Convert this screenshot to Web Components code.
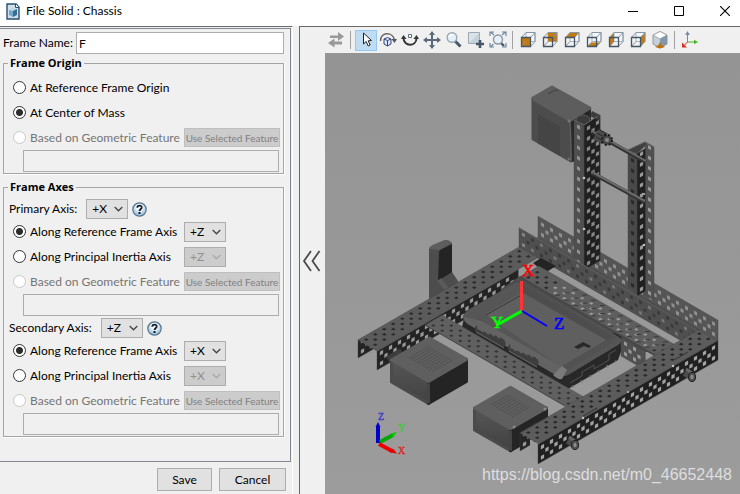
<!DOCTYPE html>
<html lang="en">
<head>
<meta charset="utf-8">
<title>File Solid : Chassis</title>
<style>
html,body{margin:0;height:100%}
body{font:12px/16px Lato,"Open Sans",sans-serif;color:#000;background:#f0f0f0;overflow:hidden}
</style>
</head>
<body>
<solid-window>
  <title-bar slot="title">File Solid : Chassis</title-bar>
  <frame-panel slot="side"></frame-panel>
  <collapse-strip slot="strip"></collapse-strip>
  <view-toolbar slot="tools"></view-toolbar>
  <model-view slot="view"></model-view>
</solid-window>
<script>
const define = (name, html, setup) => customElements.define(name, class extends HTMLElement {
  connectedCallback() {
    if (this.shadowRoot) return;
    const root = this.attachShadow({mode: 'open'});
    const t = document.createElement('template');
    t.innerHTML = typeof html === 'function' ? html(this) : html;
    root.append(t.content.cloneNode(true));
    if (setup) setup(this, root);
  }
});

define('solid-window', `
<style>
:host{display:grid;grid-template:26px minmax(0,1fr)/293px minmax(0,1fr);column-gap:6px;height:100vh;background:#f0f0f0}
header{grid-column:1/3;background:#fff}
aside{border-top:1px solid #696969;border-right:1px solid #fff;min-width:0}
main{display:grid;grid-template:26px minmax(0,1fr)/25px minmax(0,1fr);border-left:1px solid #696969;border-top:1px solid #696969;min-width:0}
.strip{grid-row:1/3}
.view{min-height:0}
::slotted(*){height:100%}
</style>
<header><slot name="title"></slot></header>
<aside><slot name="side"></slot></aside>
<main><div class="strip"><slot name="strip"></slot></div><div><slot name="tools"></slot></div><div class="view"><slot name="view"></slot></div></main>`);

define('title-bar', `
<style>
:host{display:flex;align-items:center;gap:36px;box-sizing:border-box;padding:0 10px 4px 6px;background:#fff}
.name{flex:1;display:flex;align-items:center;gap:6px}
button{all:unset;width:10px;height:20px;display:grid;place-items:center}
</style>
<span class="name"><svg width="14" height="17" viewBox="0 0 14 17"><path d="M1 1h9l3 3v12H1z" fill="#cfe0ec" stroke="#284f6b" stroke-width="1.4"/><path d="M9.500 1v3.500H13" fill="#fff" stroke="#284f6b"/><path d="M3 7l4-2 4 1-4 2z" fill="#b9d6e7"/><path d="M3 7l4 1v6l-4-2z" fill="#77a9c7"/><path d="M7 8l4-2v6l-4 2z" fill="#326f96"/></svg><span><slot></slot></span></span>
<button aria-label="Minimize"><svg width="10" height="10"><path d="M0 5.500h10" stroke="#000"/></svg></button>
<button aria-label="Maximize"><svg width="10" height="10"><path d="M.5.500h9v9h-9z" stroke="#000" fill="none"/></svg></button>
<button aria-label="Close"><svg width="10" height="10"><path d="M0 0l10 10M10 0L0 10" stroke="#000" stroke-width="1.1"/></svg></button>`);

define('axis-select', el => {
  const v = el.getAttribute('value'), off = el.hasAttribute('disabled');
  return `
<style>
:host{display:inline-grid;width:42px;height:20px;color:${off ? '#909090' : '#000'}}
select,svg{grid-area:1/1}
select{appearance:none;font:inherit;color:inherit;opacity:1;box-sizing:border-box;width:100%;height:100%;margin:0;padding:0 0 0 5px;border:1px solid #adadb0;border-radius:0;background:${off ? '#ccc' : '#e1e1e1'}}
svg{place-self:center end;margin-right:5px;pointer-events:none}
</style>
<select aria-label="${el.getAttribute('label')}" ${off ? 'disabled' : ''}>${['+X','+Y','+Z','-X','-Y','-Z'].map(a => `<option${a === v ? ' selected' : ''}>${a}</option>`).join('')}</select>
<svg width="9" height="6" viewBox="0 0 9 6"><path d="M.7 1l3.800 3.800L8.300 1" fill="none" stroke="${off ? '#aaa' : '#444'}" stroke-width="1.3"/></svg>`;
});

define('help-button', `
<style>:host{display:inline-flex}button{all:unset;display:flex}</style>
<button aria-label="Help"><svg width="15" height="15" viewBox="0 0 15 15"><defs><radialGradient id="g" cy=".35"><stop offset=".35" stop-color="#fff"/><stop offset="1" stop-color="#a8c8df"/></radialGradient></defs><circle cx="7.500" cy="7.500" r="6.700" fill="url(#g)" stroke="#54748f" stroke-width="1.2"/><path d="M5.300 5.700C5.300 2.700 10 3 9.700 5.700 9.500 7 7.600 7 7.500 9" fill="none" stroke="#111c2c" stroke-width="1.800"/><path d="M6.500 10h2v2h-2z" fill="#111c2c"/></svg></button>`);

define('axis-heading', `
<style>:host{display:flex;align-items:center;height:20px;padding-left:3px}slot[name=control]{display:flex;align-items:center;gap:4px;margin-left:9px}</style>
<span><slot></slot></span><slot name="control"></slot>`);

define('radio-row', el => `
<style>
:host{display:flex;align-items:center;height:25px;padding:0 1px 0 7px;color:${el.hasAttribute('disabled') ? '#757575' : '#000'}}
label{display:flex;align-items:center;gap:4px;width:171px;flex:none;white-space:nowrap}
input{appearance:none;flex:none;box-sizing:border-box;width:13px;height:13px;margin:0;border:1px solid #333;border-radius:50%;background:#fff}
input:checked{background:radial-gradient(circle,#2c2c2c 3px,#fff 4px)}
input:disabled{border-color:#c8c8c8}
slot[name=control]{display:flex;flex:1}
</style>
<label><input type="radio"${el.hasAttribute('checked') ? ' checked' : ''}${el.hasAttribute('disabled') ? ' disabled' : ''}><span><slot></slot></span></label><slot name="control"></slot>`,
(el, root) => {
  const input = root.querySelector('input');
  el.uncheck = () => { input.checked = false; };
  input.addEventListener('change', () => {
    el.parentNode.querySelectorAll(`radio-row[group="${el.getAttribute('group')}"]`).forEach(r => { if (r !== el) r.uncheck(); });
  });
});

define('feature-button', `
<style>:host{display:block;flex:1}button{font:10px/12px Lato,"Open Sans",sans-serif;box-sizing:border-box;width:100%;height:19px;padding:0;border:1px solid #bfbfbf;background:#ccc;color:#808080;white-space:nowrap}</style>
<button disabled><slot></slot></button>`);

define('feature-name', `
<style>:host{display:block;padding:0 2px 0 17px}input{display:block;box-sizing:border-box;width:100%;height:22px;margin:0;border:1px solid #adadb0;background:#f0f0f0}</style>
<input disabled aria-label="Geometric feature">`);

define('group-box', el => `
<style>
:host{display:block}
fieldset{margin:0;padding:4px 2px 1px;border:1px solid #a5a5a8;box-shadow:0 1px #fff,1px 0 #fff;min-width:0}
legend{font:bold 11px/16px "Open Sans","Noto Sans",sans-serif;padding:0 2px;margin-left:2px;height:16px}
</style>
<fieldset><legend>${el.getAttribute('heading')}</legend><slot></slot></fieldset>`);

define('push-button', `
<style>:host{display:block}button{font:inherit;box-sizing:border-box;height:23px;width:100%;border:1px solid #adadad;background:#e1e1e1;color:#000;padding:0}</style>
<button><slot></slot></button>`);

const based = g => `<radio-row group="${g}" disabled>Based on Geometric Feature<feature-button slot="control">Use Selected Feature</feature-button></radio-row><feature-name></feature-name>`;
const axisRows = (g, v) => `
<radio-row group="${g}" checked>Along Reference Frame Axis<axis-select slot="control" value="${v}" label="Reference frame axis"></axis-select></radio-row>
<radio-row group="${g}">Along Principal Inertia Axis<axis-select slot="control" value="${v}" label="Principal inertia axis" disabled></axis-select></radio-row>
${based(g)}`;

define('frame-panel', `
<style>
:host{display:flex;flex-direction:column;box-sizing:border-box}
.body{flex:1;margin:1px 1px 0 0;border:1px solid #828790;border-left:0;padding:3px 6px 0 3px;display:flex;flex-direction:column}
.name{display:flex;align-items:center;gap:3px}
.name input{flex:1;min-width:0;box-sizing:border-box;height:22px;border:1px solid #adadb0;padding:0 2px;font:inherit}
.origin{margin:1px 0 5px}
.second{margin-top:2px}
footer{display:flex;justify-content:flex-end;gap:7px;padding:6px 6px 3px}
.save{width:55px}.cancel{width:67px}
</style>
<div class="body">
<div class="name"><label for="n">Frame Name:</label><input id="n" value="F"></div>
<group-box class="origin" heading="Frame Origin">
<radio-row group="o">At Reference Frame Origin</radio-row>
<radio-row group="o" checked>At Center of Mass</radio-row>
${based('o')}
</group-box>
<group-box heading="Frame Axes">
<axis-heading>Primary Axis:<axis-select slot="control" value="+X" label="Primary axis"></axis-select><help-button slot="control"></help-button></axis-heading>
${axisRows('p', '+Z')}
<axis-heading class="second">Secondary Axis:<axis-select slot="control" value="+Z" label="Secondary axis"></axis-select><help-button slot="control"></help-button></axis-heading>
${axisRows('s', '+X')}
</group-box>
</div>
<footer><push-button class="save">Save</push-button><push-button class="cancel">Cancel</push-button></footer>`);

define('collapse-strip', `
<style>:host{display:grid;place-items:center start}button{all:unset;display:flex;padding-left:2px}</style>
<button aria-label="Collapse panel"><svg width="19" height="22" viewBox="0 0 19 22"><path d="M9 1L2 11l7 10M17.500 1l-7 10 7 10" fill="none" stroke="#4a4a4a" stroke-width="1.800"/></svg></button>`);

const cube = d => `<path d="M7 1.500h9v9H7z" fill="#f5f8fb" stroke="#a8b4c0"/><path d="${d}" fill="#c27a0c"/><path d="M2.500 6.500L7 1.500M11.500 6.500l4.500-5M11.500 15.500l4.500-5M2.500 15.500l4.500-5M7 1.500h9v9" fill="none" stroke="#8795a3"/><path d="M2.500 6.500h9v9h-9z" fill="none" stroke="#465568" stroke-width="1.3"/>`;
const icons = {
  Swap: '<path d="M3 4.500h8V1l6 4.500-6 4.500V7H3zM15 10.500H7.500V7.500l-6.500 4.500 6.500 4.500V13.500H15z" fill="#999"/>',
  Select: '<path d="M6.500 2v11l2.700-2.500 2 4.500 2-1-2-4.200 3.300-.3z" fill="#fff" stroke="#222"/>',
  Rotate: '<path d="M1.500 10C1.500.5 14 .5 15.500 9" fill="none" stroke="#666" stroke-width="1.500"/><path d="M12.500 8h5.500l-2.500 4z" fill="#555"/><path d="M5 8l3.500-1.500L12 8v5l-3.500 2L5 13zM5 8l3.500 1.500L12 8M8.500 9.500V15" fill="#dbe4fa" stroke="#34477f"/>',
  Roll: '<path d="M2.500 7c0 9 13 9 13 0" fill="none" stroke="#333" stroke-width="1.900"/><path d="M0 8l2.500-4L5.500 8zM12.500 8l3-4L18 8z" fill="#333"/><path d="M7.500 3.500h3v3h-3z" fill="#fff" stroke="#5a6d7c"/>',
  Pan: '<path d="M9 2v14M2 9h14" stroke="#59697a" stroke-width="2"/><path d="M9 0l3 4H6zM9 18l3-4H6zM0 9l4-3v6zM18 9l-4-3v6z" fill="#59697a"/>',
  Zoom: '<path d="M10 10l5.500 5.500" stroke="#465668" stroke-width="3"/><circle cx="7" cy="6.500" r="4.800" fill="#e6eff5" stroke="#9aa8b4" stroke-width="1.400"/><path d="M4 6c1-3 3-3 4-2" stroke="#fff" fill="none" stroke-width="1.500"/>',
  'Zoom region': '<path d="M1.500 1.500h11v11h-11z" fill="#dbe3e9" stroke="#9ba9b5"/><path d="M2 12L12 2v10z" fill="#c6d2da"/><path d="M13 9v8M9 13h8" stroke="#465668" stroke-width="2.600"/>',
  Fit: '<path d="M11 11l4 4" stroke="#465668" stroke-width="2.400"/><circle cx="9" cy="8.500" r="4.500" fill="#e6eff5" stroke="#8998a5" stroke-width="1.400"/><path d="M5 4L1.500 1M1 5V1h4M13 4l3.500-3M13 1h4v4M4.500 13L1.500 16M1 12v4h4M13 16h4v-4" fill="none" stroke="#7186a0" stroke-width="1.200"/>',
  Front: cube('M2.500 6.500h9v9h-9z'), Back: cube('M7 1.500h9v9H7z'), Top: cube('M2.500 6.500L7 1.500h9l-4.500 5z'),
  Bottom: cube('M2.500 15.500l4.500-4h8.500l-4 4z'), Left: cube('M2.500 6.500L7 1.500v9l-4.500 5z'), Right: cube('M11.500 6.500l4.500-5v9l-4.500 5z'),
  Isometric: '<path d="M2 4l7-3.500L16 4v9l-7 4-7-4z" fill="#c4d0da" stroke="#8e9aa6"/><path d="M2 4l7-3.500L16 4 9 8z" fill="#fff" stroke="#aaa"/><path d="M9 8l7-4v9l-7 4z" fill="#8496a9"/><path d="M9 11l1.500 3 3.500 2-5 1.500L4 16l3.500-2z" fill="#b8730f"/>',
  Axes: '<path d="M6.500 11V3" stroke="#7189a5"/><path d="M6.500 0l2.300 4H4.200z" fill="#7189a5"/><path d="M6.500 11H14" stroke="#48b42b"/><path d="M17 11l-4-2.300v4.600z" fill="#48b42b"/><path d="M6.500 11L3 14.500" stroke="#d43223"/><path d="M1 16.500v-5l5 5z" fill="#d43223"/>'
};
define('tool-button', el => `
<style>
:host{display:block;flex:none}
button{all:unset;box-sizing:border-box;display:grid;place-items:center;width:22px;height:21px;border:1px solid transparent}
:host([active]) button{background:#c0dcf3;border-color:#90c8f6}
</style>
<button aria-label="${el.getAttribute('icon')}"><svg width="18" height="18" viewBox="0 0 18 18">${icons[el.getAttribute('icon')]}</svg></button>`);

define('view-toolbar', `
<style>:host{display:flex;align-items:center;background:#f0f0f0}i{flex:none;width:1px;height:18px;background:#a0a0a0;margin:0 4px 0 3px}</style>
${Object.keys(icons).map((k, n) => ([1, 8, 15].includes(n) ? '<i></i>' : '') + `<tool-button icon="${k}"${k === 'Select' ? ' active' : ''}></tool-button>`).join('')}`);

/* Isometric unit vectors: one hole pitch along each model axis. */
const A = [9, 5.2], B = [9, -5.2], C = [0, -10.4];
const at = (o, u, a, v, b) => [o[0] + u[0] * a + v[0] * b, o[1] + u[1] * a + v[1] * b];
const poly = (pts, fill, extra = '') => `<polygon points="${pts.map(p => p.map(n => n.toFixed(1)).join()).join(' ')}" fill="${fill}" ${extra}/>`;
/* A perforated plate spanned by u and v, with a face-centred grid of square holes. */
function plate(o, u, nu, v, nv, fill, hole, h = .18) {
  let s = poly([o, at(o, u, nu, v, 0), at(o, u, nu, v, nv), at(o, u, 0, v, nv)], fill, 'stroke="#444" stroke-width=".4"');
  const put = (a, b) => { const c = at(o, u, a, v, b); s += poly([at(c, u, -h, v, -h), at(c, u, h, v, -h), at(c, u, h, v, h), at(c, u, -h, v, h)], typeof hole === 'function' ? hole(a, b) : hole); };
  for (let i = .5; i < nu - .2; i++) for (let j = .42; j < nv - .2; j++) {
    put(i, j);
    if (i + .5 < nu - .3 && j + .5 < nv - .3) put(i + .5, j + .5);
  }
  return s;
}
const BG = '#999';
function block(x, y, w, d, h) {
  const k = .5775, l = [x, y], t = [x + w, y - w * k], r = [x + w + d, y - w * k + d * k], f = [x + d, y + d * k], dn = p => [p[0], p[1] + h];
  return poly([l, f, dn(f), dn(l)], 'url(#lf)', 'stroke="#4b4b4b" stroke-width="3" stroke-linejoin="round"') +
    poly([f, r, dn(r), dn(f)], '#242424', 'stroke="#242424" stroke-width="3" stroke-linejoin="round"') +
    poly([l, t, r, f], '#5f5f5f', 'stroke="#5f5f5f" stroke-width="3" stroke-linejoin="round"') +
    `<path d="M${f[0]} ${f[1] + 2}v${h - 2}" stroke="#444" stroke-width="3"/>`;
}
function grill(x, y, n, len) {
  let s = '';
  for (let i = 0; i < n; i++) s += `<path d="M${x + i * 2.6} ${y + i * 1.5}l${len} ${-len * .5775}" stroke="#4e4e4e" stroke-width="1" stroke-dasharray="3 1"/>`;
  return s;
}
function pin(x, y) {
  return `<path d="M${x - 8} ${y - 5}l6 4" stroke="#4b4b4b" stroke-width="8"/><path d="M${x - 7} ${y - 8}l6 4" stroke="#666" stroke-width="3"/><ellipse cx="${x - 1}" cy="${y}" rx="3.500" ry="4.600" fill="#505050" stroke="#202020"/><ellipse cx="${x - 1}" cy="${y}" rx="1.500" ry="2.300" fill="#8c8c8c"/>`;
}
function teeth(x, y) {
  let d = `M${x} ${y}q-3 3-2 6l28 16q4-1 2-6`;
  for (let i = 0; i < 5; i++) d += 'l-3-3q-2 0-2-1l-.500 2';
  return `<path d="${d}z" fill="#3e3e3e"/><path d="M${x - 1} ${y + 7}l28 16" stroke="#6c6c6c"/>`;
}
function chassis() {
  let s = '';
  // rear rail
  s += plate([538, 237], A, 20, C, 2, '#555', '#909090', .17);
  s += poly([[519, 247], [538, 237], [718, 340], [698, 350]], '#4b4b4b');
  // rear motor
  s += poly([[533, 98], [571, 121], [571, 161], [533, 139]], '#4c4c4c', 'stroke="#4c4c4c" stroke-width="3" stroke-linejoin="round"');
  s += poly([[572, 121], [590, 109], [590, 151], [573, 161]], '#252525', 'stroke="#292929" stroke-width="2" stroke-linejoin="round"');
  s += poly([[533, 98], [552, 87], [590, 108], [571, 120]], '#5d5d5d', 'stroke="#5d5d5d" stroke-width="3" stroke-linejoin="round"');
  s += '<path d="M533 100l36 21q2 2 2 39" fill="none" stroke="#636363"/><path d="M548 94l7-4 3 1" fill="none" stroke="#3f3f3f"/>';
  for (let i = 0; i < 15; i++) s += `<path d="M538 ${115 + i * 2}l22 12.500" stroke="#3a3a3a" stroke-width=".7"/>`;
  s += '<circle cx="569" cy="121" r="1.500" fill="#777"/><circle cx="569" cy="159" r="1.500" fill="#6c6c6c"/><ellipse cx="583" cy="120" rx="7" ry="5" fill="#3a3a3a" stroke="#5a5a5a"/>';
  // tower one
  s += plate([584, 270], B, 1.8, C, 14, '#202020', '#888');
  s += plate([574, 264], A, 1.1, C, 13.8, '#4f4f4f', '#929292', .17);
  s += '<path d="M592 111l8 4v6l-10-5z" fill="#3c3c3c"/><path d="M574 120l10 5 14-9" fill="none" stroke="#666"/>';
  // tower two
  s += plate([645, 295], A, 1, C, 14.700, '#515151', BG, .17);
  s += plate([637, 296], B, .95, C, 13.700, '#202020', BG);
  s += plate([628, 287], A, 1, C, 13.100, '#494949', '#292929', .17);
  s += poly([[628, 150], [645, 142], [645, 146], [637, 154]], '#404040');
  s += '<path d="M628 150l17-8 9 5" fill="none" stroke="#5c5c5c"/>';
  // shafts and pinion
  s += '<path d="M592 132l54 30M592 173l53 29" stroke="#333" stroke-width="4"/><path d="M592 131l54 30M592 172l53 29" stroke="#6a6a6a" stroke-width="2"/>';
  s += '<path d="M596 134l9 5" stroke="#4c4c4c" stroke-width="12"/><path d="M598 129l9 5m-10-1l9 5m-10-1l9 5" stroke="#292929"/><circle cx="607" cy="140" r="5" fill="#4a4a4a" stroke="#191919" stroke-width="2" stroke-dasharray="2 2"/><circle cx="607" cy="140" r="2" fill="#888"/>';
  s += '<g fill="#c4c4c4"><circle cx="584" cy="178" r="1.300"/><circle cx="584" cy="229" r="1.300"/><circle cx="644" cy="194" r="1"/><circle cx="644" cy="245" r="1.200"/></g>';
  // near wall of rear rail
  s += plate([519, 247], A, 19.9, C, 1.85, '#4f4f4f', (a, b) => a < 1 ? '#8a8a8a' : Math.floor(a * 3 + b) % 4 ? '#393939' : '#777', .15);
  s += '<path d="M519 228l179 103v19" fill="none" stroke="#646464"/>';
  s += '<path d="M698 331v19l20-11-17-10z" fill="#565656"/><path d="M702 343l12-6" stroke="#333" stroke-width="2" stroke-dasharray="3 4"/>';
  // bracket post
  s += '<path d="M429 249q1-3 4-4l12-5q5 0 7 4v28l6 9v8l-29 17z" fill="#4d4d4d"/><path d="M439 253q0-3 3-4l10-5v28l-14 9z" fill="#242424"/><path d="M429 248l4-3 12-5q5 0 7 3l-13 7-10-1" fill="#5e5e5e"/><path d="M437 281l4-3 10 13v6z" fill="#5a5a5a"/>';
  // left channel
  s += plate([358, 358], B, 2.1, C, 1.7, '#242424', BG);
  s += plate([377, 370], B, 15.700, C, 1.800, '#232323', BG);
  s += poly([[533, 263], [541, 258], [556, 266], [545, 273]], '#242424');
  s += plate([358, 340], B, 17.9, A, 2.100, '#5b5b5b', '#2b2b2b', .13);
  // controller
  s += poly([[500, 290], [520, 276], [652, 352], [622, 352]], '#4d4d4d');
  s += '<path d="M464 318l-2 9 98 60 8 2 50-29 5-14-1-12z" fill="#282828"/>';
  s += '<path d="M463 316q2-5 10-9l40-23q7-3 12 0l94 53q5 4-1 8l-50 30q-7 3-14-1l-84-49q-8-4-7-9z" fill="#565656"/>';
  s += '<path d="M485 314l37-22 86 47-47 28z" fill="#5f5f5f"/><path d="M523 284l93 53-6 5-87-49z" fill="#4e4e4e"/><path d="M486 315l37-21" stroke="#3a3a3a"/><path d="M525 290l75 43M479 319l80 48" stroke="#4c4c4c"/><path d="M464 317q0 6 7 9l87 50 4-9-80-46z" fill="#636363"/><path d="M562 366l48-28q6-3 8-1l-4 5-48 29z" fill="#525252"/><path d="M562 366l5 4-5 9q-4 1-9-4z" fill="#7a7a7a"/>';
  s += teeth(477, 325) + teeth(510, 344);
  s += '<path d="M574 347l9-5 8 4-2 2-5-2-6 3z" fill="#292929"/><path d="M570 383l12-7v-4l12-7v4l15-9v-6l7-4" fill="none" stroke="#505050"/><path d="M572 387l44-26" stroke="#777" stroke-width="2" stroke-dasharray="2 8"/>';
  // cross beams
  s += plate([621, 356], A, 2.700, C, 1.800, '#505050', '#999', .17);
  s += plate([520, 277], A, 16.500, B, 2.100, '#5e5e5e', a => a < 3 ? '#2b2b2b' : a > 14 ? '#333' : '#9a9a9a', .13);
  for (let i = 3; i < 14; i++) s += `<path d="M${528 + i * 9} ${279.500 + i * 5.2}h5m4-2.300h5m4-2.900h5" stroke="#3c3c3c"/>`;
  s += '<path d="M520 277l148 86" stroke="#464646" stroke-width="1.500"/>';
  s += plate([425, 325], A, 16.500, B, 1.900, '#606060', '#333', .12);
  s += '<path d="M425 325l140 81" stroke="#474747"/>';
  // front motors
  s += '<path d="M388 360l14-8" stroke="#3d3d3d" stroke-width="8"/>';
  s += block(391.500, 360, 38, 37, 22) + grill(409, 358, 10, 20);
  s += block(474.500, 408, 36, 36, 22) + grill(491, 405, 9, 18);
  s += '<circle cx="514" cy="427" r="1.500" fill="#888"/><circle cx="545" cy="409" r="1.500" fill="#888"/>';
  // right channel
  s += plate([520, 451], B, 1.800, C, 1.800, '#252525', BG);
  s += poly([[530, 439], [538, 444], [538, 463], [530, 455]], BG);
  s += plate([538, 464], B, 20, C, 1.900, '#202020', '#a4a4a4');
  s += plate([520, 433], B, 19.800, A, 2.050, '#5c5c5c', '#272727', .13);
  s += '<path d="M538 444l180-104" stroke="#555"/><path d="M597 408l-14 8M688 352l-14 8" stroke="#333"/><g fill="#c4c4c4"><circle cx="583" cy="418" r="1.200"/><circle cx="673" cy="366" r="1.200"/><circle cx="628" cy="392" r="1"/></g>';
  s += pin(693, 377) + pin(576, 445);
  return s;
}
define('model-view', `
<style>:host{display:block;background:linear-gradient(#949494,#9c9c9c)}svg{display:block;width:100%;height:100%}text{white-space:pre}</style>
<svg viewBox="325 53 415 441" preserveAspectRatio="xMidYMid slice" role="img" aria-label="Chassis model">
<defs><linearGradient id="lf" x2="0" y2="1"><stop stop-color="#565656"/><stop offset="1" stop-color="#414141"/></linearGradient></defs>
${chassis()}
<g fill="none" stroke-width="2"><path d="M521.500 311v-30" stroke="#f33" stroke-width="3"/><path d="M522 311l-25 14" stroke="#0f0" stroke-width="3"/><path d="M522 311l25 15" stroke="#00f"/></g>
<g font-family="Liberation Serif,serif" font-size="17" stroke-width=".6"><text x="522" y="276" fill="red" stroke="red">X</text><text x="491" y="328" fill="#0f0" stroke="#0f0">Y</text><text x="554" y="329" fill="#00f" stroke="#00f">Z</text></g>
<path d="M378 443v-16" stroke="#0000c8" stroke-width="4"/><path d="M375.500 427l2.500-5 2.500 5z" fill="#0000c8"/>
<path d="M380 442l13-7" stroke="#0a0" stroke-width="4"/><path d="M391 433.500l6-1.500-4 5z" fill="#0c0"/>
<path d="M379 444l13 7" stroke="#e00" stroke-width="4"/><path d="M390 452.500l7 1-4-5z" fill="#d00"/>
<g font-family="Liberation Serif,serif" font-size="10" stroke-width=".3"><text x="378" y="420" fill="#33c" stroke="#33c">Z</text><text x="398" y="431" fill="#3c3" stroke="#3c3">Y</text><text x="398" y="454" fill="#d22" stroke="#d22">X</text></g>
<text x="482" y="480" font-family="Liberation Sans,sans-serif" font-size="16" fill="#dedede">https://blog.csdn.net/m0_46652448</text>
</svg>`);
</script>
</body>
</html>
